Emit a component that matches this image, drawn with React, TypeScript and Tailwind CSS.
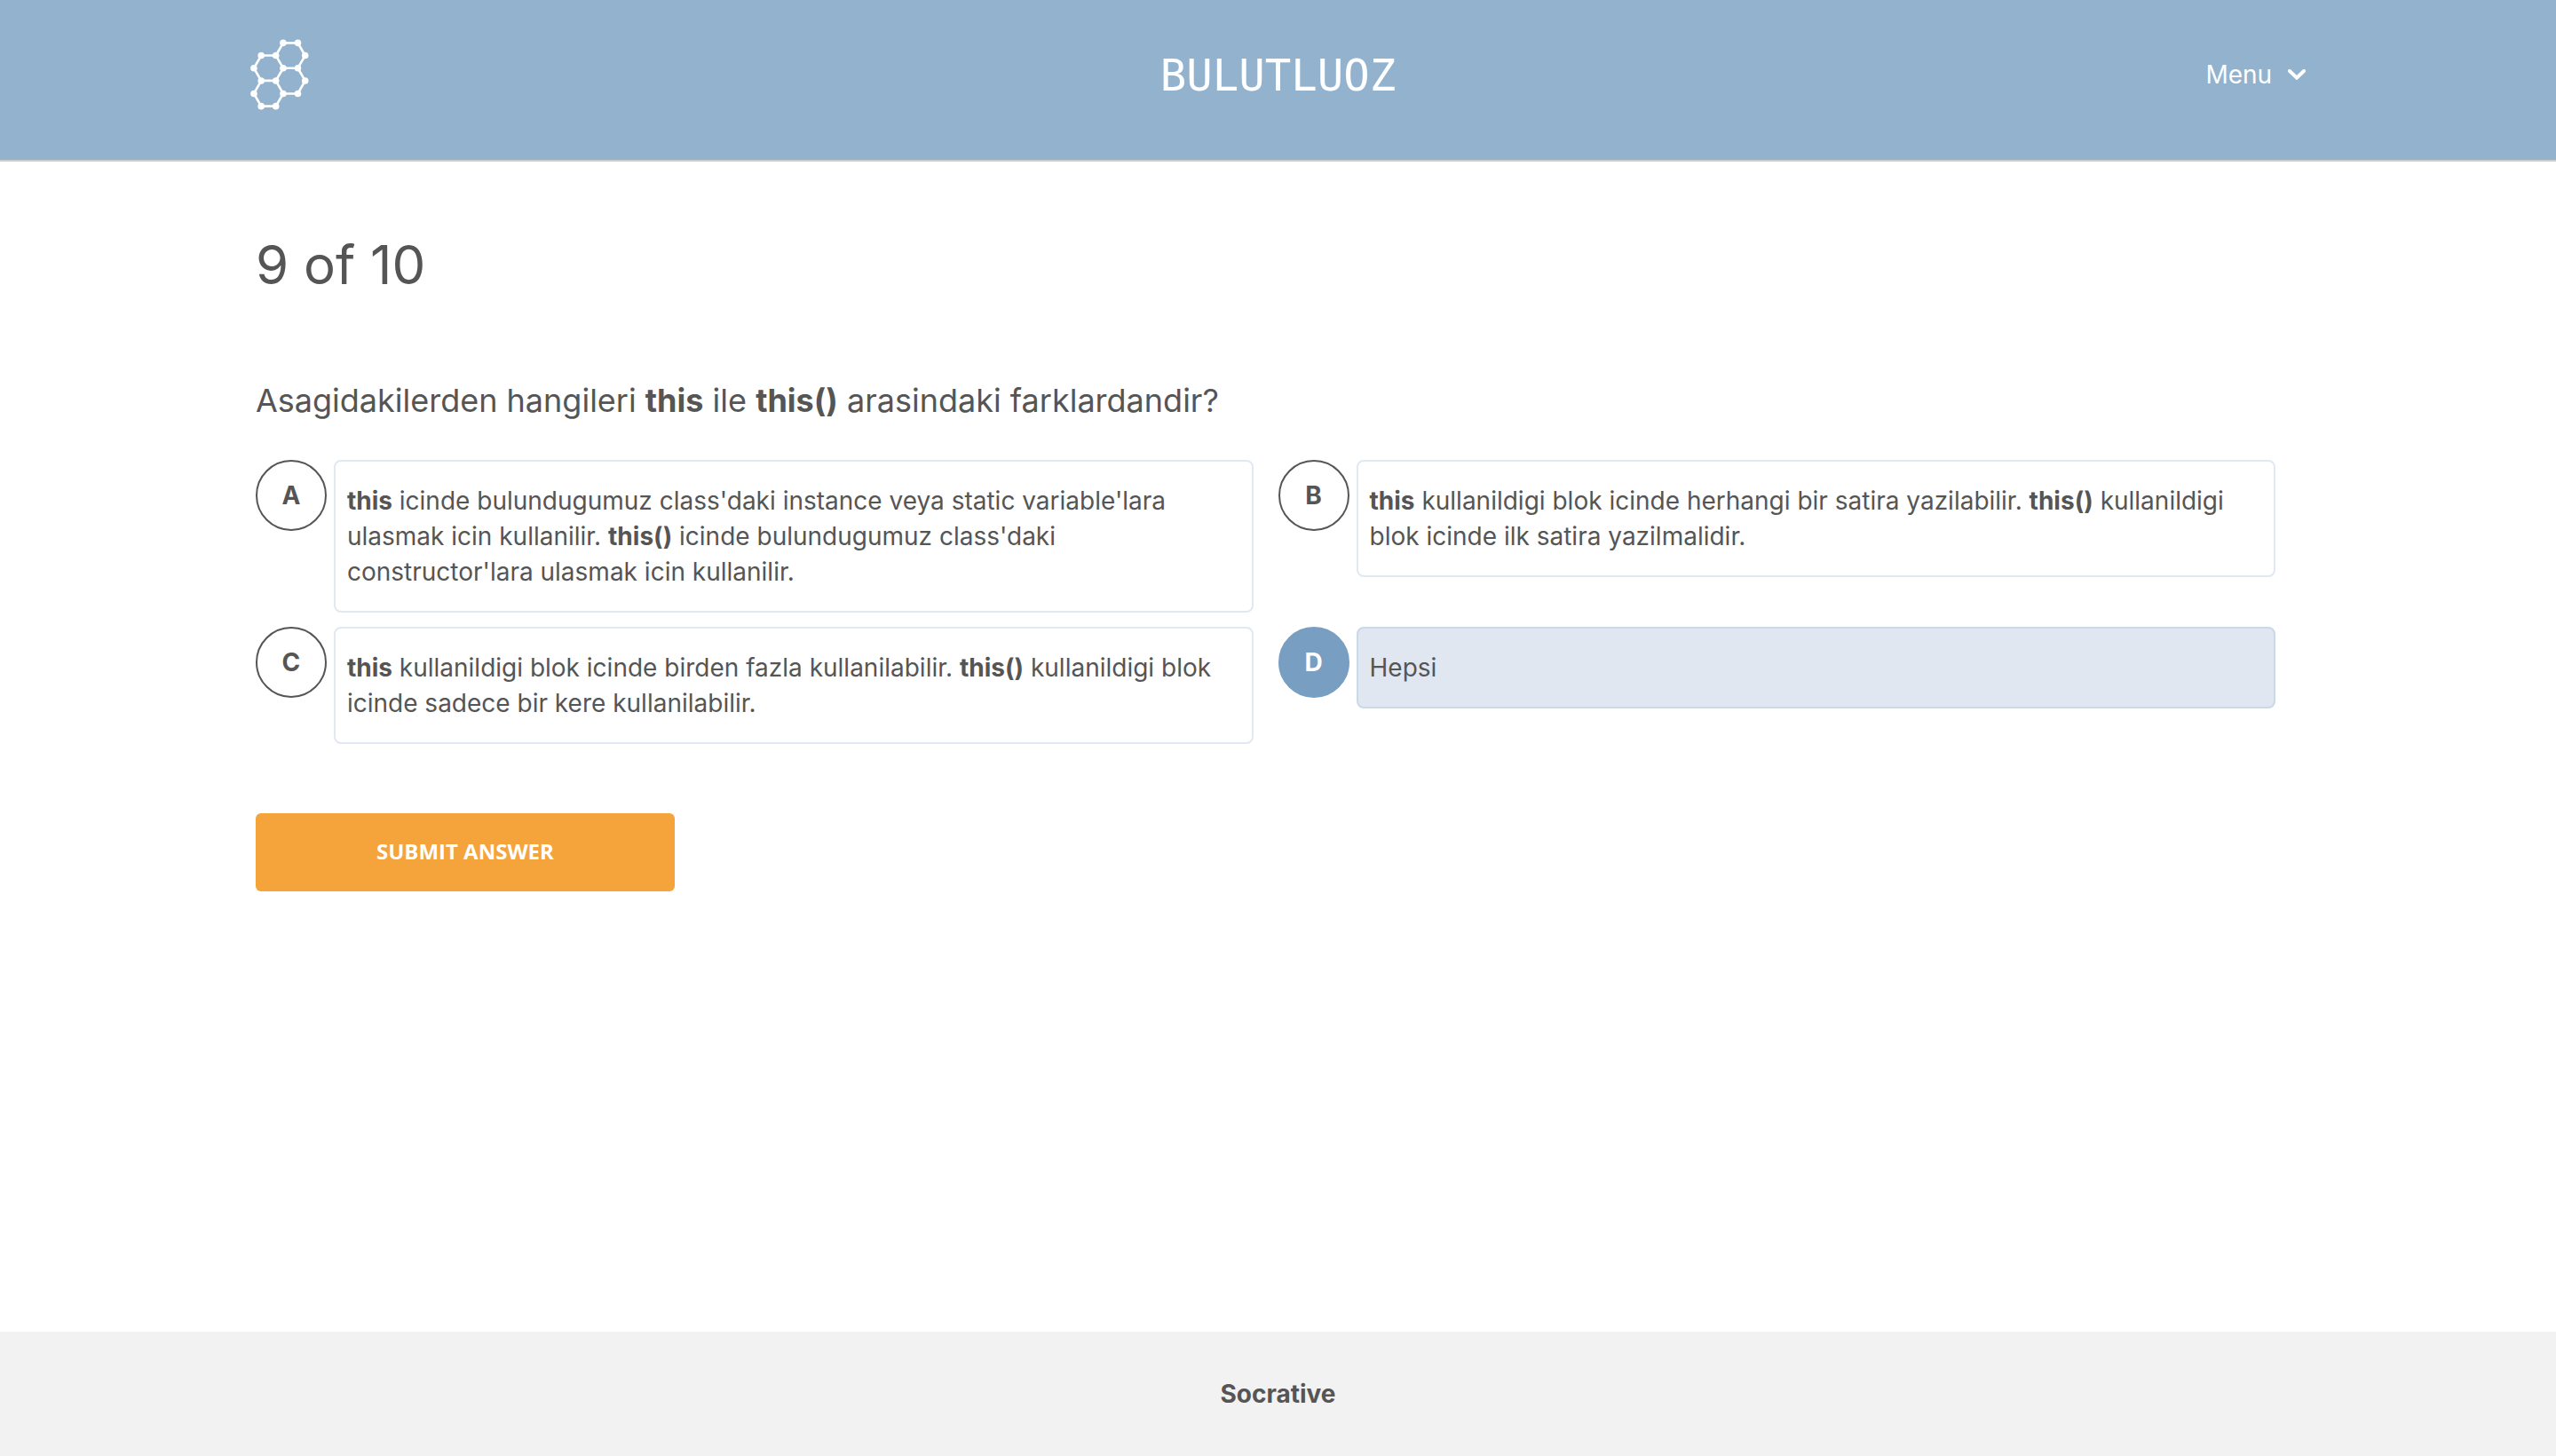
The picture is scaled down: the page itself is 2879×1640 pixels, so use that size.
import { useState, type ReactNode } from "react";

const NODES = [
  [177, 84], [227, 84], [252, 127], [227, 170], [177, 170], [152, 127],
  [102, 127], [77, 170], [102, 213], [152, 213], [252, 213], [227, 257],
  [177, 257], [77, 257], [102, 300], [152, 300],
];

function Logo() {
  return (
    <svg viewBox="65 72 200 240" className="h-20 w-[66px] text-white" aria-hidden="true">
      <path
        d="M177 84H227L252 127L227 170H177L152 127ZM152 127H102L77 170L102 213H152L177 170M227 170L252 213L227 257H177L152 213M102 213L77 257L102 300H152L177 257"
        fill="none"
        stroke="currentColor"
        strokeWidth="8"
      />
      {NODES.map(([x, y]) => (
        <circle key={`${x}-${y}`} cx={x} cy={y} r="11.5" fill="currentColor" />
      ))}
    </svg>
  );
}

function Strong({ children }: { children: ReactNode }) {
  return <strong className="font-bold">{children}</strong>;
}

type Choice = { letter: string; body: ReactNode };

const CHOICES: Choice[] = [
  {
    letter: "A",
    body: (
      <>
        <Strong>this</Strong> icinde bulundugumuz class'daki instance veya static variable'lara
        ulasmak icin kullanilir. <Strong>this()</Strong> icinde bulundugumuz class'daki
        constructor'lara ulasmak icin kullanilir.
      </>
    ),
  },
  {
    letter: "B",
    body: (
      <>
        <Strong>this</Strong> kullanildigi blok icinde herhangi bir satira yazilabilir.{" "}
        <Strong>this()</Strong> kullanildigi blok icinde ilk satira yazilmalidir.
      </>
    ),
  },
  {
    letter: "C",
    body: (
      <>
        <Strong>this</Strong> kullanildigi blok icinde birden fazla kullanilabilir.{" "}
        <Strong>this()</Strong> kullanildigi blok icinde sadece bir kere kullanilabilir.
      </>
    ),
  },
  { letter: "D", body: "Hepsi" },
];

export default function App() {
  const [selected, setSelected] = useState("D");

  return (
    <div className="flex min-h-screen flex-col bg-white font-['Inter',sans-serif] text-[28px] leading-10 text-[#555555]">
      <header className="border-b-2 border-[#cccccc] bg-[#92b2ce] pt-11 pb-14 text-white">
        <div className="mx-auto w-4/5">
          <div className="-mx-1.5 grid grid-cols-[1fr_auto_1fr] items-center">
            <a href="#" aria-label="Home" className="justify-self-start">
              <Logo />
            </a>
            <div className="pt-1 font-['DejaVu_Sans_Mono',monospace] text-[49px] leading-[56px] font-light">
              BULUTLUOZ
            </div>
            <button type="button" className="flex items-center gap-[18px] justify-self-end">
              Menu
              <svg viewBox="0 0 20 12" className="h-3 w-5" aria-hidden="true">
                <path
                  d="M2 2L10 9.6L18 2"
                  fill="none"
                  stroke="currentColor"
                  strokeWidth="4"
                  strokeLinecap="round"
                />
              </svg>
            </button>
          </div>
        </div>
      </header>

      <main className="mx-auto w-4/5 grow pt-20">
        <h1 className="text-6xl leading-[72px]">9 of 10</h1>
        <form onSubmit={(e) => e.preventDefault()}>
          <fieldset>
            <legend className="pt-[89px] pb-[39px] text-4xl leading-[56px]">
              Asagidakilerden hangileri <Strong>this</Strong> ile <Strong>this()</Strong>{" "}
              arasindaki farklardandir?
            </legend>
            <div className="grid grid-cols-2 items-start gap-y-4">
              {CHOICES.map(({ letter, body }) => (
                <label key={letter} className="flex cursor-pointer items-start gap-2 pr-7">
                  <input
                    type="radio"
                    name="answer"
                    value={letter}
                    checked={selected === letter}
                    onChange={() => setSelected(letter)}
                    className="peer sr-only"
                  />
                  <span className="flex size-20 shrink-0 items-center justify-center rounded-full border-2 border-[#555555] font-bold peer-checked:border-[#789ec2] peer-checked:bg-[#789ec2] peer-checked:text-white">
                    {letter}
                  </span>
                  <span className="grow rounded-lg border-2 border-[#e0e8f2] px-[13px] py-6 peer-checked:border-[#c9d9e8] peer-checked:bg-[#e0e7f1]">
                    {body}
                  </span>
                </label>
              ))}
            </div>
          </fieldset>
          <button
            type="submit"
            className="mt-[78px] h-22 w-[472px] rounded-md bg-[#f5a33b] pb-0.5 font-['Open_Sans',sans-serif] text-2xl font-bold text-white"
          >
            SUBMIT ANSWER
          </button>
        </form>
      </main>

      <footer className="bg-[#f2f2f2] py-[50px] text-center font-bold">Socrative</footer>
    </div>
  );
}
